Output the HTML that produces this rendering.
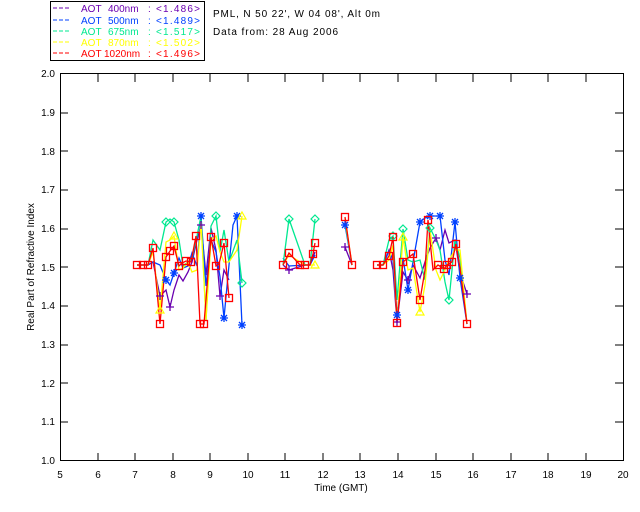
<!DOCTYPE html><html><head><style>body{margin:0;background:#fff}svg{display:block}text{font-family:"Liberation Sans",sans-serif;font-size:10px}</style></head><body>
<svg width="640" height="512" xmlns="http://www.w3.org/2000/svg">
<defs>
<g id="sq"><rect x="-3.5" y="-3.5" width="7" height="7" fill="none" stroke="#f00" stroke-width="1.3"/></g>
<g id="ast" stroke="#0040ff" stroke-width="1.3"><path d="M-4 0H4M0-4V4M-3-3L3 3M-3 3L3-3"/></g>
<g id="pl" stroke="#6a00b0" stroke-width="1.3"><path d="M-4 0H4M0-4V4"/></g>
<g id="dm" fill="none" stroke="#00e890" stroke-width="1.2"><path d="M0-4L4 0L0 4L-4 0Z"/></g>
<g id="tr" fill="none" stroke="#ffff00" stroke-width="1.2"><path d="M0-4L4 3H-4Z"/></g>
</defs>
<rect x="50.5" y="1.5" width="154" height="59" fill="#fff" stroke="#000"/>
<g font-size="11">
<g fill="#6a00b0"><path d="M53 8h4M59 8h4M65 8h4" stroke="#6a00b0"/><text x="81" y="12">AOT</text><text x="108" y="12">400nm</text><text x="148" y="12">:</text><text x="156" y="12" textLength="44">&lt;1.486&gt;</text></g>
<g fill="#0040ff"><path d="M53 20h4M59 20h4M65 20h4" stroke="#0040ff"/><text x="81" y="24">AOT</text><text x="108" y="24">500nm</text><text x="148" y="24">:</text><text x="156" y="24" textLength="44">&lt;1.489&gt;</text></g>
<g fill="#00e890"><path d="M53 31h4M59 31h4M65 31h4" stroke="#00e890"/><text x="81" y="35">AOT</text><text x="108" y="35">675nm</text><text x="148" y="35">:</text><text x="156" y="35" textLength="44">&lt;1.517&gt;</text></g>
<g fill="#ffff00"><path d="M53 42h4M59 42h4M65 42h4" stroke="#ffff00"/><text x="81" y="46">AOT</text><text x="108" y="46">870nm</text><text x="148" y="46">:</text><text x="156" y="46" textLength="44">&lt;1.502&gt;</text></g>
<g fill="#f00"><path d="M53 53h4M59 53h4M65 53h4" stroke="#f00"/><text x="81" y="57">AOT</text><text x="104" y="57">1020nm</text><text x="148" y="57">:</text><text x="156" y="57" textLength="44">&lt;1.496&gt;</text></g>
<text x="213" y="17" fill="#000" textLength="167">PML, N 50 22', W 04 08', Alt 0m</text>
<text x="213" y="35" fill="#000" textLength="125">Data from: 28 Aug 2006</text>
</g>
<rect x="60.5" y="73.5" width="563" height="387" fill="none" stroke="#000"/>
<g stroke="#000">
<path d="M98 461v-8M135 461v-8M173 461v-8M210 461v-8M248 461v-8M285 461v-8M323 461v-8M360 461v-8M398 461v-8M436 461v-8M473 461v-8M511 461v-8M548 461v-8M586 461v-8M98 74v8M135 74v8M173 74v8M210 74v8M248 74v8M285 74v8M323 74v8M360 74v8M398 74v8M436 74v8M473 74v8M511 74v8M548 74v8M586 74v8"/>
<path d="M60 422h8M60 383h8M60 345h8M60 306h8M60 267h8M60 229h8M60 190h8M60 151h8M60 113h8M623 422h-8M623 383h-8M623 345h-8M623 306h-8M623 267h-8M623 229h-8M623 190h-8M623 151h-8M623 113h-8"/>
</g>
<g fill="#000" text-anchor="middle">
<text x="60" y="478">5</text><text x="98" y="478">6</text><text x="135" y="478">7</text><text x="173" y="478">8</text><text x="210" y="478">9</text><text x="248" y="478">10</text><text x="285" y="478">11</text><text x="323" y="478">12</text><text x="360" y="478">13</text><text x="398" y="478">14</text><text x="436" y="478">15</text><text x="473" y="478">16</text><text x="511" y="478">17</text><text x="548" y="478">18</text><text x="586" y="478">19</text><text x="623" y="478">20</text>
<text x="341" y="491">Time (GMT)</text>
</g>
<g fill="#000" text-anchor="end">
<text x="55" y="464">1.0</text><text x="55" y="425">1.1</text><text x="55" y="387">1.2</text><text x="55" y="348">1.3</text><text x="55" y="309">1.4</text><text x="55" y="271">1.5</text><text x="55" y="232">1.6</text><text x="55" y="193">1.7</text><text x="55" y="155">1.8</text><text x="55" y="116">1.9</text><text x="55" y="77">2.0</text>
</g>
<text transform="translate(34,267) rotate(-90)" text-anchor="middle" fill="#000">Real Part of Refractive Index</text>
<g fill="none" stroke-width="1.3">
<g stroke="#6a00b0">
<polyline points="137,265 143,265 148,265 153,262 160,296 166,290 170,307 174,290 179,275 183,281 188,272 192,262 197,240 201,225 206,275 211,228 216,250 220,296 224,270 229,280"/>
<polyline points="283,265 289,270 305,265 310,265 315,252"/><polyline points="345,247 352,265"/>
<polyline points="377,265 383,265 389,250 393,270 397,322 403,272 408,280 413,265 420,278 425,262 430,248 436,238 440,250 445,230 449,243 455,240 460,273 467,294"/>
</g>
<g stroke="#0040ff">
<polyline points="137,265 143,265 148,265 153,262 160,265 166,280 170,285 174,273 179,258 183,268 188,266 192,253 197,266 201,216 206,286 211,240 216,252 220,277 224,318 229,265 233,225 237,216 242,325"/>
<polyline points="283,258 289,266 305,265 310,265 315,255"/><polyline points="345,225 352,265"/>
<polyline points="377,265 383,265 389,251 393,260 397,315 403,258 408,290 413,262 420,222 425,218 430,216 436,216 440,216 445,260 449,275 455,222 460,278 467,324"/>
</g>
<g stroke="#00e890">
<polyline points="137,265 143,265 148,265 153,240 160,250 166,222 170,219 174,222 179,240 183,266 188,262 192,258 197,236 201,216 206,320 211,226 216,216 220,252 224,230 229,262 237,240 242,283"/>
<polyline points="283,265 289,219 305,265 310,265 315,219"/><polyline points="345,222 352,265"/>
<polyline points="377,265 383,265 389,240 393,236 397,300 403,229 408,260 413,262 420,260 425,280 430,228 436,240 440,250 445,282 449,300 455,240 460,258 467,324"/>
</g>
<g stroke="#ffff00">
<polyline points="137,265 143,265 148,265 153,252 160,310 166,242 170,240 174,236 179,270 183,268 188,262 192,272 197,270 201,222 206,320 211,240 216,236 220,252 224,262 229,262 237,250 242,216"/>
<polyline points="283,265 289,255 305,265 310,265 315,265"/><polyline points="345,218 352,265"/>
<polyline points="377,265 383,265 389,260 393,245 397,323 403,237 408,270 413,268 420,312 425,285 430,230 436,270 440,280 445,270 449,260 455,250 460,250 467,324"/>
</g>
<g stroke="#f00">
<polyline points="137,265 143,265 148,265 153,248 160,324 166,257 170,251 174,246 179,266 182,263 186,261 191,262 196,236 200,324 204,324 211,237 216,266 219,264 224,243 229,298"/>
<polyline points="283,265 289,253 300,265 305,265 310,265 313,254 315,243"/><polyline points="345,217 352,265"/>
<polyline points="377,265 383,265 389,256 393,237 397,323 403,262 413,254 420,300 425,270 428,220 433,270 438,265 444,269 447,265 452,262 456,244 460,268 467,324"/>
</g>
</g>
<g>
<use href="#pl" x="160" y="296"/><use href="#pl" x="170" y="307"/><use href="#pl" x="201" y="225"/><use href="#pl" x="220" y="296"/><use href="#pl" x="397" y="322"/><use href="#pl" x="408" y="280"/><use href="#pl" x="436" y="238"/><use href="#pl" x="467" y="294"/><use href="#pl" x="345" y="247"/><use href="#pl" x="289" y="270"/>
<use href="#ast" x="166" y="280"/><use href="#ast" x="174" y="273"/><use href="#ast" x="201" y="216"/><use href="#ast" x="224" y="318"/><use href="#ast" x="237" y="216"/><use href="#ast" x="242" y="325"/><use href="#ast" x="397" y="315"/><use href="#ast" x="420" y="222"/><use href="#ast" x="430" y="216"/><use href="#ast" x="440" y="216"/><use href="#ast" x="455" y="222"/><use href="#ast" x="460" y="278"/><use href="#ast" x="345" y="225"/><use href="#ast" x="408" y="290"/>
<use href="#dm" x="166" y="222"/><use href="#dm" x="174" y="222"/><use href="#dm" x="216" y="216"/><use href="#dm" x="289" y="219"/><use href="#dm" x="315" y="219"/><use href="#dm" x="393" y="236"/><use href="#dm" x="403" y="229"/><use href="#dm" x="449" y="300"/><use href="#dm" x="242" y="283"/><use href="#dm" x="430" y="228"/>
<use href="#tr" x="160" y="310"/><use href="#tr" x="174" y="236"/><use href="#tr" x="242" y="216"/><use href="#tr" x="420" y="312"/><use href="#tr" x="403" y="237"/><use href="#tr" x="315" y="265"/>
<use href="#sq" x="137" y="265"/><use href="#sq" x="143" y="265"/><use href="#sq" x="148" y="265"/><use href="#sq" x="153" y="248"/><use href="#sq" x="160" y="324"/><use href="#sq" x="166" y="257"/><use href="#sq" x="170" y="251"/><use href="#sq" x="174" y="246"/><use href="#sq" x="179" y="266"/><use href="#sq" x="186" y="261"/><use href="#sq" x="191" y="262"/><use href="#sq" x="196" y="236"/><use href="#sq" x="200" y="324"/><use href="#sq" x="204" y="324"/><use href="#sq" x="211" y="237"/><use href="#sq" x="216" y="266"/><use href="#sq" x="224" y="243"/><use href="#sq" x="229" y="298"/><use href="#sq" x="283" y="265"/><use href="#sq" x="289" y="253"/><use href="#sq" x="300" y="265"/><use href="#sq" x="305" y="265"/><use href="#sq" x="313" y="254"/><use href="#sq" x="315" y="243"/><use href="#sq" x="345" y="217"/><use href="#sq" x="352" y="265"/><use href="#sq" x="377" y="265"/><use href="#sq" x="383" y="265"/><use href="#sq" x="389" y="256"/><use href="#sq" x="393" y="237"/><use href="#sq" x="397" y="323"/><use href="#sq" x="403" y="262"/><use href="#sq" x="413" y="254"/><use href="#sq" x="420" y="300"/><use href="#sq" x="428" y="220"/><use href="#sq" x="438" y="265"/><use href="#sq" x="444" y="269"/><use href="#sq" x="447" y="265"/><use href="#sq" x="452" y="262"/><use href="#sq" x="456" y="244"/><use href="#sq" x="467" y="324"/>
</g>
</svg>
</body></html>
